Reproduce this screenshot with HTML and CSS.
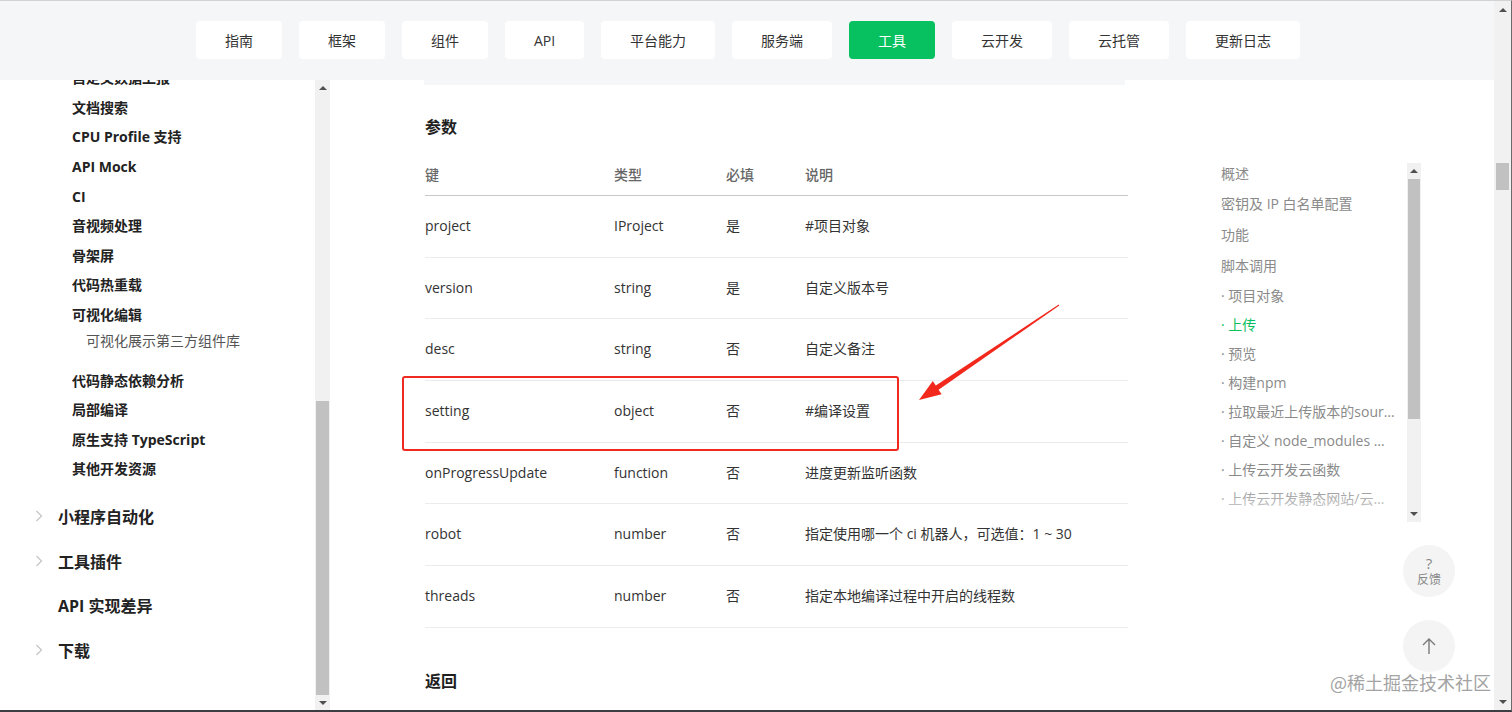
FILE: index.html
```html
<!DOCTYPE html>
<html lang="zh-CN">

<head>
  <meta charset="UTF-8">
  <meta name="viewport" content="width=device-width, initial-scale=1.0">
  <title>CI - 工具</title>
  <link rel="stylesheet" href="styles.css">
</head>

<body>

  <div class="window">
    <div class="page">
      <header class="topbar">
        <nav class="tabs">
          <a class="tab">指南</a>
          <a class="tab">框架</a>
          <a class="tab">组件</a>
          <a class="tab">API</a>
          <a class="tab">平台能力</a>
          <a class="tab">服务端</a>
          <a class="tab active">工具</a>
          <a class="tab">云开发</a>
          <a class="tab">云托管</a>
          <a class="tab">更新日志</a>
        </nav>
      </header>

      <div class="body">
        <aside class="side">
          <div class="side-scroll">
            <ul class="side-list">
              <li class="item">自定义数据上报</li>
              <li class="item">文档搜索</li>
              <li class="item">CPU Profile 支持</li>
              <li class="item">API Mock</li>
              <li class="item">CI</li>
              <li class="item">音视频处理</li>
              <li class="item">骨架屏</li>
              <li class="item">代码热重载</li>
              <li class="item">可视化编辑</li>
              <li class="sub">可视化展示第三方组件库</li>
              <li class="item">代码静态依赖分析</li>
              <li class="item">局部编译</li>
              <li class="item">原生支持 TypeScript</li>
              <li class="item">其他开发资源</li>
              <li class="top first">
                <span class="chev"><svg width="8" height="12" viewBox="0 0 8 12"><polyline points="1.5,1 6.5,6 1.5,11" /></svg></span>
                小程序自动化
              </li>
              <li class="top">
                <span class="chev"><svg width="8" height="12" viewBox="0 0 8 12"><polyline points="1.5,1 6.5,6 1.5,11" /></svg></span>
                工具插件
              </li>
              <li class="top">
                <span class="chev"></span>
                API 实现差异
              </li>
              <li class="top">
                <span class="chev"><svg width="8" height="12" viewBox="0 0 8 12"><polyline points="1.5,1 6.5,6 1.5,11" /></svg></span>
                下载
              </li>
            </ul>
          </div>
          <div class="vbar side-bar">
            <span class="arrow up"></span>
            <span class="gap"></span>
            <span class="thumb"></span>
            <span class="arrow down"></span>
          </div>
        </aside>

        <main class="main">
          <article class="doc">
            <div class="code-tail"></div>
            <h3>参数</h3>
            <table class="params">
              <colgroup>
                <col style="width: 189px">
                <col style="width: 112px">
                <col style="width: 79px">
                <col>
              </colgroup>
              <thead>
                <tr>
                  <th>键</th>
                  <th>类型</th>
                  <th>必填</th>
                  <th>说明</th>
                </tr>
              </thead>
              <tbody>
                <tr>
                  <td>project</td>
                  <td>IProject</td>
                  <td>是</td>
                  <td>#项目对象</td>
                </tr>
                <tr>
                  <td>version</td>
                  <td>string</td>
                  <td>是</td>
                  <td>自定义版本号</td>
                </tr>
                <tr>
                  <td>desc</td>
                  <td>string</td>
                  <td>否</td>
                  <td>自定义备注</td>
                </tr>
                <tr>
                  <td>setting</td>
                  <td>object</td>
                  <td>否</td>
                  <td>#编译设置</td>
                </tr>
                <tr>
                  <td>onProgressUpdate</td>
                  <td>function</td>
                  <td>否</td>
                  <td>进度更新监听函数</td>
                </tr>
                <tr>
                  <td>robot</td>
                  <td>number</td>
                  <td>否</td>
                  <td>指定使用哪一个 ci 机器人，可选值：1 ~ 30</td>
                </tr>
                <tr>
                  <td>threads</td>
                  <td>number</td>
                  <td>否</td>
                  <td>指定本地编译过程中开启的线程数</td>
                </tr>
              </tbody>
            </table>
            <h3 class="returns">返回</h3>
          </article>

          <div class="toc">
            <div class="toc-scroll">
              <ul class="toc-list">
                <li class="lv1">概述</li>
                <li class="lv1">密钥及 IP 白名单配置</li>
                <li class="lv1">功能</li>
                <li class="lv1">脚本调用</li>
                <li class="lv2">· 项目对象</li>
                <li class="lv2 active">· 上传</li>
                <li class="lv2">· 预览</li>
                <li class="lv2">· 构建npm</li>
                <li class="lv2">· 拉取最近上传版本的sourceMap</li>
                <li class="lv2">· 自定义 node_modules 位置的构建npm</li>
                <li class="lv2">· 上传云开发云函数</li>
                <li class="lv2">· 上传云开发静态网站/云存储</li>
              </ul>
            </div>
            <div class="vbar toc-bar">
              <span class="arrow up"></span>
              <span class="thumb"></span>
              <span class="gap"></span>
              <span class="arrow down"></span>
            </div>
          </div>
        </main>
      </div>
    </div>

    <div class="vbar page-bar">
      <span class="arrow up"></span>
      <span class="gap top-gap"></span>
      <span class="thumb"></span>
      <span class="gap"></span>
      <span class="arrow down"></span>
    </div>
  </div>

  <!-- 标注 -->
  <div class="mark-box"></div>
  <svg class="mark-arrow" width="1512" height="712" viewBox="0 0 1512 712">
    <polygon points="1059.3,305.4 938.6,389.7 941.6,394.2 919,400 932.8,381 935.8,385.5 1058.7,304.6" />
  </svg>

  <div class="float-btn feedback">
    <span class="q">?</span>
    <span class="label">反馈</span>
  </div>
  <div class="float-btn to-top">
    <svg width="16" height="18" viewBox="0 0 16 18">
      <path d="M8 17V2M2 8l6-6 6 6" />
    </svg>
  </div>
  <div class="watermark">@稀土掘金技术社区</div>

</body>

</html>
```

FILE: styles.css
```css
* {
  margin: 0;
  padding: 0;
  box-sizing: border-box;
}

body {
  position: relative;
  font-family: "Open Sans", "Noto Sans CJK SC", sans-serif;
  font-size: 14px;
  color: #333;
  overflow: hidden;
  background: #fff;
}

ul {
  list-style: none;
}

.window {
  display: flex;
  height: 712px;
  border-top: 1px solid #d2d2d2;
  border-bottom: 2px solid #3b3d40;
  border-right: 1px solid #6a6a6a;
  overflow: hidden;
}

.page {
  flex: 1;
  min-width: 0;
  display: flex;
  flex-direction: column;
}

/* 顶部导航 */
.topbar {
  position: relative;
  z-index: 2;
  height: 79px;
  flex-shrink: 0;
  display: flex;
  justify-content: center;
  padding: 20px 0 0 2px;
  background: #f5f6f7;
}

.tabs {
  display: flex;
  gap: 17px;
  height: 38px;
}

.tab {
  display: flex;
  align-items: center;
  padding: 0 29px;
  background: #fff;
  border-radius: 4px;
  font-size: 14px;
  color: #333;
}

.tab.active {
  background: #07c160;
  color: #fff;
}

.body {
  flex: 1;
  min-height: 0;
  display: flex;
}

/* 左侧菜单 */
.side {
  width: 330px;
  flex-shrink: 0;
  display: flex;
}

.side-scroll {
  flex: 1;
  overflow: hidden;
}

.side-list {
  margin-top: -16.8px;
  color: #222;
}

.side-list .item {
  padding-left: 72px;
  line-height: 29.6px;
  font-size: 14px;
  font-weight: bold;
}

.side-list .sub {
  padding-left: 86px;
  margin-bottom: 14px;
  line-height: 22px;
  font-size: 14px;
  color: #555;
}

.side-list .top {
  display: flex;
  align-items: center;
  height: 44.5px;
  padding-left: 35px;
  font-size: 16px;
  font-weight: bold;
}

.side-list .top.first {
  margin-top: 10px;
}

.chev {
  width: 23px;
  display: flex;
  align-items: center;
}

.chev polyline {
  fill: none;
  stroke: #c4c4c4;
  stroke-width: 1.2;
}

/* 滚动条 */
.vbar {
  display: flex;
  flex-direction: column;
  flex-shrink: 0;
  background: #f1f1f1;
}

.vbar .gap {
  flex: 1;
}

.vbar .thumb {
  background: #c1c1c1;
  margin: 0 1px;
}

.vbar .arrow {
  height: 15px;
  display: flex;
  align-items: center;
  justify-content: center;
}

.vbar .arrow::before {
  content: '';
  border-left: 4px solid transparent;
  border-right: 4px solid transparent;
}

.vbar .arrow.up::before {
  border-bottom: 4px solid #505050;
}

.vbar .arrow.down::before {
  border-top: 4px solid #505050;
}

.side-bar {
  width: 15px;
}

.side-bar .thumb {
  height: 294px;
}

.page-bar {
  width: 17px;
}

.page-bar .arrow {
  height: 17px;
}

.page-bar .top-gap {
  flex: 0 0 145px;
}

.page-bar .thumb {
  height: 27px;
  margin: 0 2px;
}

/* 正文 */
.main {
  flex: 1;
  display: flex;
  align-items: flex-start;
}

.doc {
  width: 703px;
  margin-left: 95px;
}

.code-tail {
  width: 701px;
  height: 5px;
  margin-left: -1px;
  background: #f6f7f8;
}

.doc h3 {
  margin-top: 30px;
  font-size: 16px;
  line-height: 24px;
  font-weight: bold;
  color: #1f1f1f;
}

.doc h3.returns {
  margin-top: 41px;
}

.params {
  width: 703px;
  margin-top: 16px;
  border-collapse: collapse;
  table-layout: fixed;
}

.params th {
  padding: 10px 0;
  line-height: 20px;
  text-align: left;
  font-weight: 500;
  color: #666;
  border-bottom: 1px solid #c8c8c8;
}

.params td {
  padding: 0;
  line-height: 60.67px;
  color: #333;
  white-space: nowrap;
  border-bottom: 1px solid #ececec;
}

/* 右侧目录 */
.toc {
  display: flex;
  width: 213px;
  height: 359px;
  margin: 83px 0 0 80px;
}

.toc-scroll {
  position: relative;
  flex: 1;
  min-width: 0;
  padding: 0 12px 0 13px;
  overflow: hidden;
}

.toc-scroll::after {
  content: '';
  position: absolute;
  left: 0;
  right: 0;
  bottom: 0;
  height: 38px;
  background: linear-gradient(rgba(255, 255, 255, 0), rgba(255, 255, 255, 0.85));
}

.toc-list {
  margin-top: -4.4px;
  color: #8a8a8a;
}

.toc-list li {
  white-space: nowrap;
  overflow: hidden;
  text-overflow: ellipsis;
}

.toc-list .lv1 {
  line-height: 30.7px;
}

.toc-list .lv2 {
  line-height: 29px;
}

.toc-list .active {
  color: #07c160;
}

.toc-bar {
  width: 14px;
}

.toc-bar .arrow {
  height: 16px;
}

.toc-bar .thumb {
  height: 240px;
}

/* 标注 */
.mark-box {
  position: absolute;
  left: 402px;
  top: 376px;
  width: 497px;
  height: 75px;
  border: 2.5px solid #ef2a20;
  border-radius: 3px;
}

.mark-arrow {
  position: absolute;
  left: 0;
  top: 0;
}

.mark-arrow polygon {
  fill: #f2281d;
}

/* 悬浮按钮 */
.float-btn {
  position: absolute;
  left: 1403px;
  width: 52px;
  height: 52px;
  border-radius: 50%;
  background: #f4f4f4;
  display: flex;
  flex-direction: column;
  align-items: center;
  justify-content: center;
  color: #888;
}

.feedback {
  top: 545px;
}

.feedback .q {
  font-size: 15px;
  line-height: 17px;
}

.feedback .label {
  font-size: 12px;
  line-height: 16px;
}

.to-top {
  top: 620px;
}

.to-top path {
  fill: none;
  stroke: #7a7a7a;
  stroke-width: 1.4;
}

.watermark {
  position: absolute;
  left: 1330px;
  top: 669px;
  font-family: "Noto Sans CJK SC", sans-serif;
  font-size: 18px;
  line-height: 26px;
  color: #a3a3a3;
  text-shadow: 0 0 2px #fff, 0 0 2px #fff;
}
```
